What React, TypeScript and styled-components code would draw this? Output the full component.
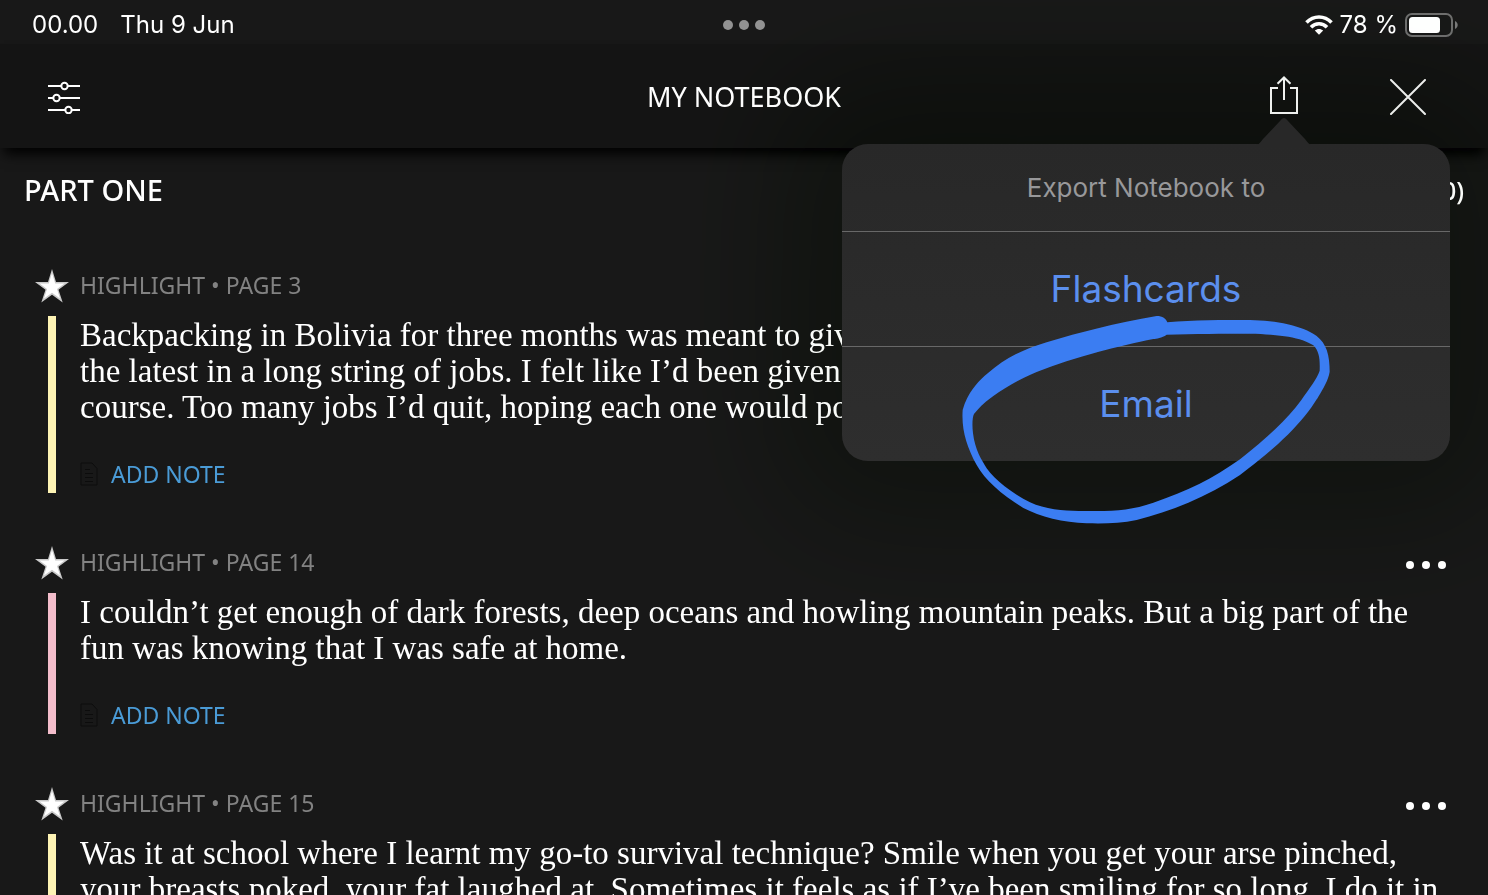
import React from "react";
import styled, { createGlobalStyle } from "styled-components";

const GlobalStyle = createGlobalStyle`
  * { box-sizing: border-box; }
  html { background: #181818; }
  body { margin: 0; background: #181818; color: #fff; }
  button { font: inherit; color: inherit; background: none; border: 0; padding: 0; cursor: pointer; }
  svg { display: block; }
`;

const ui = `"Noto Sans", "Open Sans", sans-serif`;
const system = `Inter, "Liberation Sans", sans-serif`;
const book = `"Liberation Serif", serif`;

const Screen = styled.div`
  position: relative;
  display: flex;
  flex-direction: column;
  height: 100vh;
  overflow: hidden;
  background: #181818;
  font-family: ${ui};
`;

const StatusBar = styled.div`
  display: grid;
  grid-template-columns: 1fr auto 1fr;
  align-items: center;
  flex: none;
  height: 44px;
  padding: 5px 30px 0;
  font-family: ${system};
  font-size: 24px;
  line-height: 38px;
`;

const StatusGroup = styled.div<{ $end?: boolean; $gap: number }>`
  display: flex;
  align-items: center;
  justify-content: ${(p) => (p.$end ? "flex-end" : "flex-start")};
  gap: ${(p) => p.$gap}px;
  padding-left: 2px;
`;

const Toolbar = styled.header`
  display: grid;
  grid-template-columns: 1fr auto 1fr;
  align-items: center;
  flex: none;
  height: 104px;
  padding: 2px 48px 0;
  background: #141414;
  box-shadow: 0 10px 12px -4px #000;
  z-index: 1;
`;

const Title = styled.h1`
  margin: 0;
  font-size: 27px;
  line-height: 36px;
  font-weight: 400;
`;

const Actions = styled.div`
  display: flex;
  align-items: center;
  justify-content: flex-end;
  gap: 91px;
  padding-right: 14px;
`;

const IconButton = styled.button`
  display: flex;
  justify-self: start;
`;

const MenuButton = styled(IconButton)`
  padding-top: 4px;
`;

const Content = styled.main`
  flex: 1;
  min-height: 0;
  overflow: hidden;
`;

const SectionHeader = styled.div`
  display: flex;
  align-items: center;
  justify-content: space-between;
  height: 86px;
  margin-bottom: 22px;
  padding: 0 24px 2px;
`;

const SectionTitle = styled.h2`
  margin: 0;
  font-family: ${ui};
  font-size: 29px;
  line-height: 40px;
  font-weight: 500;
`;

const Count = styled.span`
  font-size: 25px;
  line-height: 36px;
  font-weight: 500;
`;

const Entry = styled.article`
  margin-bottom: 40px;
`;

const EntryHeader = styled.div`
  display: flex;
  align-items: center;
  gap: 10px;
  height: 60px;
  padding: 0 41px 0 34px;
`;

const Meta = styled.span`
  flex: 1;
  padding-bottom: 2px;
  color: #828282;
  font-size: 23px;
  line-height: 32px;
`;

const EntryBody = styled.div<{ $color: string }>`
  margin: 0 32px 0 48px;
  padding: 1px 0 0 24px;
  border-left: 8px solid ${(p) => p.$color};
`;

const Quote = styled.p`
  margin: 0 0 32px;
  font-family: ${book};
  font-size: 33px;
  line-height: 36px;
  white-space: nowrap;
`;

const Line = styled.span`
  display: block;
`;

const AddNote = styled.button`
  display: flex;
  align-items: center;
  gap: 12px;
  height: 36px;
  padding-bottom: 2px;
  color: #4a9bd6;
  font-size: 23px;
  line-height: 34px;
`;

const PopoverLayer = styled.div`
  position: absolute;
  top: 144px;
  right: 38px;
  width: 608px;
  z-index: 3;
`;

const PopoverGlow = styled.div`
  position: absolute;
  top: 144px;
  right: 38px;
  width: 608px;
  height: 317px;
  border-radius: 26px;
  box-shadow: 0 0 130px 60px rgb(9, 6, 10);
  mix-blend-mode: difference;
  pointer-events: none;
  z-index: 2;
`;

const Popover = styled.div`
  border-radius: 26px;
  background: linear-gradient(#282828, #2e2e2e);
  font-family: ${system};
  text-align: center;
`;

const Arrow = styled.svg`
  position: absolute;
  top: -27px;
  right: 138px;
`;

const PopoverTitle = styled.div`
  padding-top: 1px;
  color: #98989a;
  font-size: 26px;
  line-height: 86px;
`;

const PopoverItem = styled.button`
  display: block;
  width: 100%;
  height: 115px;
  border-top: 1px solid #686868;
  color: #5b8fee;
  font-size: 37px;
  line-height: 114px;
`;

const Marker = styled.svg`
  position: absolute;
  top: 156px;
  left: 98px;
  pointer-events: none;
`;

const FilterIcon = () => (
  <svg width="32" height="34" viewBox="0 -2 32 34" fill="none" stroke="#fff" strokeWidth="2">
    <path d="M0 4h13M20 4h12M0 16h5M12 16h20M0 28h17M24 28h8" />
    <circle cx="16.5" cy="4" r="3.2" />
    <circle cx="8.5" cy="16" r="3.2" />
    <circle cx="20.5" cy="28" r="3.2" />
  </svg>
);

const ShareIcon = () => (
  <svg width="30" height="42" viewBox="0 0 30 42" fill="none" stroke="#f4f4f4" strokeWidth="2">
    <path d="M9 12H2v25h26V12h-7M15 24V2M8.500 7.800 15 1.500 21.500 7.800" />
  </svg>
);

const CloseIcon = () => (
  <svg width="36" height="36" viewBox="0 0 36 36" stroke="#f0f0f0" strokeWidth="2" strokeLinecap="round">
    <path d="M1 1l34 34M35 1 1 35" />
  </svg>
);

const WifiIcon = () => (
  <svg width="28" height="20" viewBox="0 0 28 20" fill="none" stroke="#fff" strokeWidth="3.600">
    <path d="M1.500 7.500C8.500 0.200 19.500 0.200 26.500 7.500" />
    <path d="M6 12.200c4.600-4.700 11.400-4.700 16 0" />
    <path d="M14 19.800l-4.200-4.200c2.400-2.200 6-2.200 8.400 0z" fill="#fff" stroke="none" />
  </svg>
);

const BatteryIcon = () => (
  <svg width="53" height="24" viewBox="0 0 53 24">
    <rect x="1" y="1" width="46" height="22" rx="6" fill="none" stroke="#6e6e6e" strokeWidth="2" />
    <rect x="4" y="4" width="31" height="16" rx="3.500" fill="#fff" />
    <path d="M50 8c3.600 1.600 3.600 6.400 0 8z" fill="#7a7a7a" />
  </svg>
);

const Dots = ({ r, color }: { r: number; color: string }) => (
  <svg width="42" height="12" viewBox="0 0 42 12" fill={color}>
    <circle cx="5" cy="6" r={r} />
    <circle cx="21" cy="6" r={r} />
    <circle cx="37" cy="6" r={r} />
  </svg>
);

const StarIcon = () => (
  <svg width="36" height="36" viewBox="0 0 36 36">
    <path d="M18 1l4 13h13L24.500 21.800l4.200 12.700L18 26.800 7.300 34.500l4.200-12.700L1 14h13z" fill="#c9c9c9" />
    <path d="M18 5l3.200 10.500h9.300l-7.500 5.500 3 9.500-8-5.800-8 5.800 3-9.500-7.500-5.500h9.300z" fill="#fff" />
  </svg>
);

const NoteIcon = () => (
  <svg width="19" height="24" viewBox="0 0 19 24" fill="none" stroke="#0c0c0c">
    <path d="M1 1h11l5 5.500V23H1zM5 7.500h5M5 11.500h8M5 15.500h8M5 19.500h8" />
  </svg>
);

const entries = [
  {
    page: 3,
    color: "#fdf3b4",
    lines: [
      "Backpacking in Bolivia for three months was meant to give",
      "the latest in a long string of jobs. I felt like I’d been given a",
      "course. Too many jobs I’d quit, hoping each one would point",
    ],
  },
  {
    page: 14,
    color: "#f3bdcb",
    lines: [
      "I couldn’t get enough of dark forests, deep oceans and howling mountain peaks. But a big part of the",
      "fun was knowing that I was safe at home.",
    ],
  },
  {
    page: 15,
    color: "#fdf3b4",
    lines: [
      "Was it at school where I learnt my go-to survival technique? Smile when you get your arse pinched,",
      "your breasts poked, your fat laughed at. Sometimes it feels as if I’ve been smiling for so long, I do it in",
    ],
  },
];

export default function App() {
  return (
    <Screen>
      <GlobalStyle />
      <StatusBar>
        <StatusGroup $gap={22}>
          <span>00.00</span>
          <span>Thu 9 Jun</span>
        </StatusGroup>
        <Dots r={5} color="#929292" />
        <StatusGroup $end $gap={7}>
          <WifiIcon />
          <span>78 %</span>
          <BatteryIcon />
        </StatusGroup>
      </StatusBar>
      <Toolbar>
        <IconButton aria-label="Filter">
          <FilterIcon />
        </IconButton>
        <Title>MY NOTEBOOK</Title>
        <Actions>
          <IconButton aria-label="Export">
            <ShareIcon />
          </IconButton>
          <IconButton aria-label="Close">
            <CloseIcon />
          </IconButton>
        </Actions>
      </Toolbar>
      <Content>
        <SectionHeader>
          <SectionTitle>PART ONE</SectionTitle>
          <Count>(10)</Count>
        </SectionHeader>
        {entries.map((entry) => (
          <Entry key={entry.page}>
            <EntryHeader>
              <StarIcon />
              <Meta>HIGHLIGHT • PAGE {entry.page}</Meta>
              <MenuButton aria-label={`Options for page ${entry.page}`}>
                <Dots r={4} color="#fff" />
              </MenuButton>
            </EntryHeader>
            <EntryBody $color={entry.color}>
              <Quote>
                {entry.lines.map((line) => (
                  <Line key={line}>{line}</Line>
                ))}
              </Quote>
              <AddNote>
                <NoteIcon />
                ADD NOTE
              </AddNote>
            </EntryBody>
          </Entry>
        ))}
      </Content>
      <PopoverGlow />
      <PopoverLayer>
        <Arrow width="56" height="28" viewBox="0 0 56 28" fill="#282828">
          <path d="M0 28C4 27 5 24 8 21L24 4c3-4 5-4 8 0l16 17c3 3 4 6 8 7z" />
        </Arrow>
        <Popover role="dialog" aria-label="Export Notebook">
          <PopoverTitle>Export Notebook to</PopoverTitle>
          <PopoverItem>Flashcards</PopoverItem>
          <PopoverItem>Email</PopoverItem>
        </Popover>
        <Marker width="400" height="240" viewBox="0 0 1200 720" fill="#3b7df2" fillRule="evenodd">
          <path
            d="M650 48C668 48 678 56 682 67C760 60 850 60 930 60C1010 62 1085 76 1130 108C1160 132 1169 165 1169 215C1165 240 1150 265 1135 290C1090 365 1020 435 900 525C800 592 690 635 590 660C540 671 490 671 440 670C370 668 300 650 250 624C180 580 135 540 110 495C80 440 64 390 68 330C78 290 105 250 145 218C200 172 250 148 320 127C430 92 540 68 650 48Z
            M680 104C665 114 650 116 640 117C540 137 400 172 290 216C220 246 140 292 102 342C97 352 96 375 99 400C105 450 125 480 140 505C165 540 215 580 270 607C320 630 380 634 430 633C520 634 570 632 640 608C740 575 820 535 900 478C980 415 1040 360 1084 300C1110 262 1130 238 1139 212C1140 180 1139 155 1120 136C1085 112 1020 103 930 101C850 101 760 101 680 104Z"
          />
        </Marker>
      </PopoverLayer>
    </Screen>
  );
}
